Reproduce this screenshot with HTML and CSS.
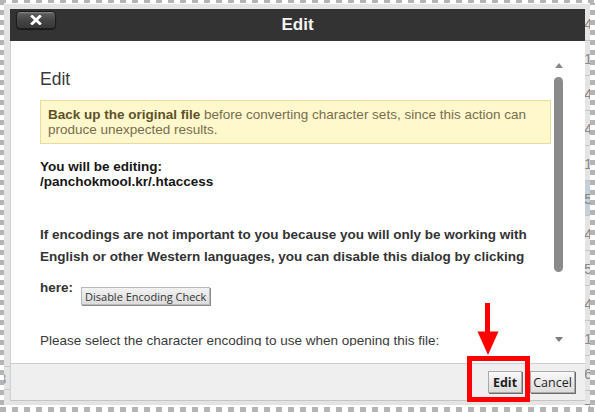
FILE: index.html
```html
<!DOCTYPE html>
<html lang="en">
<head>
<meta charset="utf-8">
<title>Edit</title>
<link rel="stylesheet" href="styles.css">
</head>
<body>
<div class="page">
  <div class="backdrop">
    <div class="bg-left"><div class="bg-cell">3</div></div>
    <div class="bg-right">
      <div class="bg-row">4</div>
      <div class="bg-row">1</div>
      <div class="bg-row">4</div>
      <div class="bg-row">4</div>
      <div class="bg-row">12</div>
      <div class="bg-row sel">5</div>
      <div class="bg-row">40</div>
      <div class="bg-row">5</div>
      <div class="bg-row">40</div>
      <div class="bg-row">19</div>
      <div class="bg-row">67</div>
      <div class="bg-row">7</div>
    </div>
  </div>

  <div class="dialog">
    <div class="window">
      <div class="titlebar">
        <div class="tb-left">
          <button class="close-btn" aria-label="Close">
            <svg width="12" height="10" viewBox="0 0 12 10"><path d="M2.2 1.4 L9.8 8.6 M9.8 1.4 L2.2 8.6" stroke="#fff" stroke-width="2.8" stroke-linecap="square"/></svg>
          </button>
        </div>
        <div class="title">Edit</div>
        <div class="tb-right"></div>
      </div>
      <div class="body">
        <div class="content">
          <h2 class="heading">Edit</h2>
          <div class="notice"><strong>Back up the original file</strong> before converting character sets, since this action can produce unexpected results.</div>
          <p class="editing">You will be editing:<br>/panchokmool.kr/.htaccess</p>
          <p class="encodings">If encodings are not important to you because you will only be working with English or other Western languages, you can disable this dialog by clicking</p>
          <div class="here-row"><span class="here">here:</span><button class="btn-disable">Disable Encoding Check</button></div>
          <p class="select">Please select the character encoding to use when opening this file:</p>
        </div>
        <div class="scrollbar">
          <span class="arrow-up"></span>
          <span class="thumb"></span>
          <span class="arrow-down"></span>
        </div>
      </div>
      <div class="footer">
        <button class="btn btn-edit">Edit</button>
        <button class="btn btn-cancel">Cancel</button>
      </div>
    </div>
  </div>

  <div class="highlight"></div>
  <svg class="pointer" width="26" height="54" viewBox="0 0 26 54">
    <rect x="9" y="0" width="5" height="31" fill="#ff0000"/>
    <polygon points="1.5,28.5 22.5,28.5 12,52" fill="#ff0000"/>
  </svg>
  <div class="edges"></div>
</div>
</body>
</html>
```

FILE: styles.css
```css
* { box-sizing: border-box; }

html, body {
  margin: 0;
  padding: 0;
}

body {
  width: 595px;
  height: 412px;
  overflow: hidden;
  background: #fff;
  font-family: "Liberation Sans", Arial, sans-serif;
}

.page {
  position: relative;
  width: 595px;
  height: 412px;
  overflow: hidden;
  background: #fff;
}

/* background page behind the modal */
.backdrop {
  display: flex;
  justify-content: space-between;
  height: 100%;
}

.bg-left {
  width: 12px;
  padding-top: 366px;
}

.bg-cell {
  height: 24px;
  line-height: 24px;
  font-size: 15px;
  color: #8a8a8a;
  text-indent: -2px;
  border-top: 1px solid #dadada;
  border-bottom: 1px solid #dadada;
}

.bg-right {
  width: 12px;
  padding-top: 6px;
  display: flex;
  flex-direction: column;
}

.bg-row {
  flex: none;
  height: 35px;
  line-height: 35px;
  font-size: 15px;
  color: #7a7a7a;
  padding-left: 1px;
  border-bottom: 1px solid #d0d0d0;
  white-space: nowrap;
  overflow: hidden;
}

.bg-row.sel { background: #d5e3ef; }

/* modal */
.dialog {
  position: absolute;
  left: 4px;
  top: 4px;
  width: 586px;
  height: 401px;
  padding: 5px 5px 4px 6px;
  background: rgba(165, 165, 165, 0.3);
}

.window {
  display: flex;
  flex-direction: column;
  height: 100%;
  background: #fff;
}

.titlebar {
  flex: none;
  height: 32px;
  background: #333;
  display: grid;
  grid-template-columns: 1fr auto 1fr;
  padding: 0 6px;
}

.tb-left { display: flex; align-items: flex-start; }

.close-btn {
  margin-top: 2px;
  width: 40px;
  height: 18px;
  padding: 0;
  display: flex;
  align-items: center;
  justify-content: center;
  border: 1px solid #1c1c1c;
  border-radius: 4px;
  background: linear-gradient(#8a8a8a 0, #5a5a5a 2px, #444 55%, #383838 100%);
  box-shadow: 0 1px 1px rgba(0, 0, 0, 0.5);
}

.title {
  color: #f4f4f4;
  font-weight: bold;
  font-size: 17px;
  line-height: 32px;
}

.body {
  flex: 1;
  min-height: 0;
  display: flex;
  gap: 3px;
  padding: 17px 22px 17px 29px;
  border-left: 1px solid #cfcfcf;
}

.content {
  flex: 1;
  min-width: 0;
  overflow: hidden;
  font-size: 13.5px;
  line-height: 15.5px;
  color: #333;
}

.heading {
  margin: 11px 0 0;
  font-size: 17.5px;
  font-weight: normal;
  line-height: 21px;
  color: #3a3a3a;
}

.notice {
  margin-top: 10px;
  padding: 5.5px 7px;
  border: 1px solid #e8dc9c;
  background: #fff8cd;
  color: #776d4c;
}

.notice strong { color: #5e5228; }

.editing {
  margin: 14.5px 0 0;
  font-weight: bold;
  color: #161616;
}

.encodings {
  margin: 34px 0 0;
  font-weight: bold;
  line-height: 22px;
  color: #333;
}

.here-row {
  display: flex;
  align-items: flex-start;
  margin-top: 9px;
}

.here {
  font-weight: bold;
  line-height: 22px;
  color: #333;
}

.btn-disable {
  margin: 10.5px 0 0 8px;
  height: 18px;
  padding: 0 3px;
  font-family: "Open Sans", "DejaVu Sans", sans-serif;
  font-size: 11px;
  line-height: 15px;
  color: #333;
  background: linear-gradient(#f2f2f2, #dcdcdc);
  border: 1px solid #b8b8b8;
  border-radius: 0;
  box-shadow: 1px 1px 0 #8c8c8c;
}

.select {
  margin: 27.5px 0 0;
  color: #3a3a3a;
}

.scrollbar {
  width: 9px;
  display: flex;
  flex-direction: column;
  align-items: center;
}

.arrow-up {
  margin-top: 5px;
  width: 0;
  height: 0;
  border-left: 4.5px solid transparent;
  border-right: 4.5px solid transparent;
  border-bottom: 5px solid #8a8a8a;
}

.thumb {
  margin-top: 9px;
  width: 9px;
  height: 195px;
  border-radius: 4.5px;
  background: #8a8a8a;
}

.arrow-down {
  margin-top: auto;
  margin-bottom: 4px;
  width: 0;
  height: 0;
  border-left: 4.5px solid transparent;
  border-right: 4.5px solid transparent;
  border-top: 5px solid #7c7c7c;
}

.footer {
  flex: none;
  height: 38px;
  display: flex;
  justify-content: flex-end;
  align-items: flex-start;
  gap: 8px;
  padding: 7px 10px 0 0;
  background: #efefef;
  border-top: 1px solid #cdcdcd;
  border-bottom: 1px solid #c4c4c4;
  border-left: 1px solid #cfcfcf;
}

.btn {
  height: 22px;
  padding: 0;
  font-family: "Open Sans", "DejaVu Sans", sans-serif;
  font-size: 12.5px;
  line-height: 19px;
  color: #1e1e1e;
  text-align: center;
  background: linear-gradient(#f9f9f9, #dcdcdc);
  border: 1px solid #a9a9a9;
  border-radius: 0;
  box-shadow: 1px 1px 0 #6a6a6a;
}

.btn-edit { width: 34px; font-weight: bold; }
.btn-cancel { width: 45px; }

/* annotations laid over the screenshot */
.highlight {
  position: absolute;
  left: 467px;
  top: 356px;
  width: 63px;
  height: 46px;
  border: 5px solid #ff0000;
}

.pointer {
  position: absolute;
  left: 476px;
  top: 303px;
}

.edges {
  position: absolute;
  inset: 0;
  pointer-events: none;
  background:
    repeating-linear-gradient(to right, #b4b4b4 0 6px, #fff 6px 12px) left top / 100% 3px no-repeat,
    repeating-linear-gradient(to right, #b4b4b4 0 6px, #fff 6px 12px) left bottom / 100% 5px no-repeat,
    repeating-linear-gradient(to bottom, #b4b4b4 0 5px, #fff 5px 10px) left top / 4px 100% no-repeat,
    repeating-linear-gradient(to bottom, #b4b4b4 0 5px, #fff 5px 10px) right top / 5px 100% no-repeat;
}
```
